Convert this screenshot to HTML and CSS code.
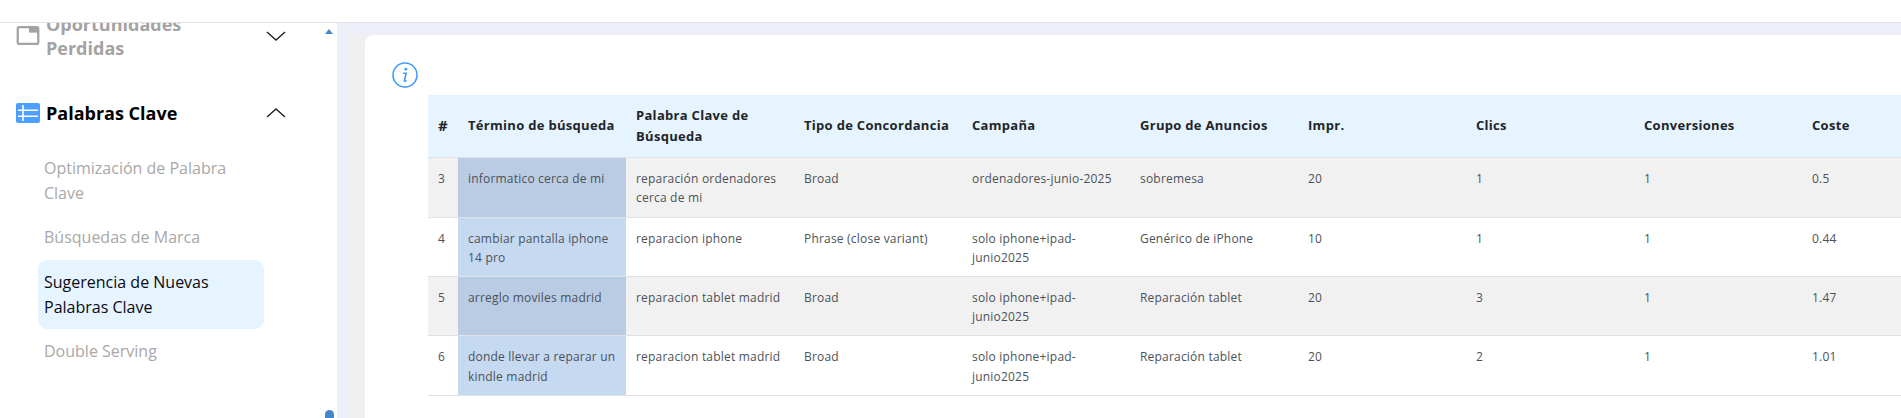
FILE: index.html
```html
<!DOCTYPE html>
<html lang="es">
<head>
<meta charset="utf-8">
<title>Palabras Clave</title>
<link rel="stylesheet" href="styles.css">
</head>
<body>
<header class="topbar"></header>
<div class="layout">
  <aside class="sidebar">
    <nav class="nav">
      <div class="group group-clipped">
        <svg class="group-icon" viewBox="0 0 24 20" aria-hidden="true"><rect x="1.2" y="1.2" width="21.6" height="17.6" rx="1.5" fill="none" stroke="#a3a3a3" stroke-width="2.4"/><rect x="13" y="1" width="10" height="6" fill="#a3a3a3"/></svg>
        <span class="group-title">Oportunidades Perdidas</span>
        <svg class="chevron" viewBox="0 0 20 10" aria-hidden="true"><path d="M1 1l9 8 9-8" fill="none" stroke="#222" stroke-width="1.4"/></svg>
      </div>
      <div class="group group-active">
        <svg class="group-icon" viewBox="0 0 24 20" aria-hidden="true"><rect width="24" height="20" rx="2" fill="#4a9fff"/><path d="M2 7.2h20M2 13.2h20M7 2v16" stroke="#fff" stroke-width="1.6"/></svg>
        <span class="group-title">Palabras Clave</span>
        <svg class="chevron" viewBox="0 0 20 10" aria-hidden="true"><path d="M1 9l9-8 9 8" fill="none" stroke="#222" stroke-width="1.4"/></svg>
      </div>
      <ul class="sub">
        <li class="sub-item">Optimización de Palabra Clave</li>
        <li class="sub-item">Búsquedas de Marca</li>
        <li class="sub-item sub-item-selected">Sugerencia de Nuevas Palabras Clave</li>
        <li class="sub-item">Double Serving</li>
      </ul>
    </nav>
    <span class="scroll-up"></span>
    <span class="scroll-thumb"></span>
  </aside>
  <main class="content">
    <div class="gutter">
      <section class="card">
        <svg class="info" viewBox="0 0 26 26" aria-hidden="true"><circle cx="13" cy="13" r="12" fill="none" stroke="#3f9bfd" stroke-width="1.6"/><circle cx="13.9" cy="7.2" r="1.4" fill="#3f9bfd"/><path d="M11.2 11.3h3l-1.8 7.4c-.1.6.6.7 2-.4" fill="none" stroke="#3f9bfd" stroke-width="1.6"/></svg>
        <table class="report">
          <thead>
            <tr><th class="col-n">#</th><th>Término de búsqueda</th><th>Palabra Clave de Búsqueda</th><th>Tipo de Concordancia</th><th>Campaña</th><th>Grupo de Anuncios</th><th>Impr.</th><th>Clics</th><th>Conversiones</th><th>Coste</th></tr>
          </thead>
          <tbody>
            <tr class="odd"><td class="col-n">3</td><td class="term">informatico cerca de mi</td><td>reparación ordenadores cerca de mi</td><td>Broad</td><td>ordenadores-junio-2025</td><td>sobremesa</td><td>20</td><td>1</td><td>1</td><td>0.5</td></tr>
            <tr><td class="col-n">4</td><td class="term">cambiar pantalla iphone 14 pro</td><td>reparacion iphone</td><td>Phrase (close variant)</td><td>solo iphone+ipad-junio2025</td><td>Genérico de iPhone</td><td>10</td><td>1</td><td>1</td><td>0.44</td></tr>
            <tr class="odd"><td class="col-n">5</td><td class="term">arreglo moviles madrid</td><td>reparacion tablet madrid</td><td>Broad</td><td>solo iphone+ipad-junio2025</td><td>Reparación tablet</td><td>20</td><td>3</td><td>1</td><td>1.47</td></tr>
            <tr><td class="col-n">6</td><td class="term">donde llevar a reparar un kindle madrid</td><td>reparacion tablet madrid</td><td>Broad</td><td>solo iphone+ipad-junio2025</td><td>Reparación tablet</td><td>20</td><td>2</td><td>1</td><td>1.01</td></tr>
          </tbody>
        </table>
      </section>
    </div>
  </main>
</div>
</body>
</html>
```

FILE: styles.css
```css
* { box-sizing: border-box; }
html, body { margin: 0; height: 100%; overflow: hidden; background: #fff; }
body { font-family: "Open Sans", "Noto Sans", sans-serif; color: #212529; }

.topbar { height: 23px; background: #fff; border-bottom: 1px solid #dee2e6; }
.layout { display: flex; height: 395px; }

.sidebar { position: relative; flex: 0 0 337px; overflow: hidden; background: #fff; }
.nav { margin-top: -12px; padding-left: 16px; }
.group { display: flex; align-items: center; width: 270px; }
.group-clipped { height: 49px; color: #a3a3a3; }
.group-active { margin-top: 40px; height: 26px; color: #000; }
.group-icon { flex: 0 0 24px; width: 24px; height: 20px; }
.group-clipped .group-icon { align-self: flex-start; margin-top: 15px; height: 19px; }
.group-title { flex: 1; padding-left: 6px; font-size: 18px; font-weight: 700; line-height: 24px; }
.group-clipped .group-title { padding-right: 60px; }
.chevron { flex: 0 0 20px; width: 20px; height: 10px; }
.group-clipped .chevron { align-self: flex-start; margin-top: 20px; }

.sub { list-style: none; display: flex; flex-direction: column; gap: 0.5px; margin: 20px 0 0 22px; padding: 0; width: 226px; }
.sub-item { padding: 9.5px 6px; font-size: 16px; line-height: 25px; color: #a8a8a8; border-radius: 9px; }
.sub-item-selected { background: #e6f4ff; color: #0a0a14; }

.scroll-up { position: absolute; left: 325px; top: 6px; width: 0; height: 0; border-left: 4.5px solid transparent; border-right: 4.5px solid transparent; border-bottom: 5px solid #4488cc; }
.scroll-thumb { position: absolute; left: 325px; bottom: 0; width: 9px; height: 8px; background: #4488cc; border-radius: 5px 5px 0 0; }

.content { flex: 1; min-width: 0; background: #eceff8; padding: 12px 0 0 13px; }
.gutter { height: 100%; background: #f0f0f0; padding-left: 15px; }
.card { height: 100%; background: #fff; border-radius: 9px 0 0 0; padding: 27px 0 0 27px; overflow: hidden; }

.info { display: block; width: 26px; height: 26px; }

.report { margin: 7px 0 0 36px; width: 1542px; table-layout: fixed; border-collapse: collapse; font-size: 12px; letter-spacing: 0.2px; }
.report th, .report td { width: 168px; padding: 11px 10px 9px; text-align: left; vertical-align: top; border-bottom: 1px solid #dee2e6; }
.report th { background: #e6f4ff; font-size: 13px; letter-spacing: 0.3px; font-weight: 700; line-height: 21.6px; padding: 9.5px 10px; vertical-align: middle; color: #212529; }
.report td { line-height: 19.2px; color: #4c5258; }
.report .col-n { width: 30px; }
.report th.col-n { font-size: 15px; }
.odd td { background: #f1f1f1; }
.report .term { background: #c5d9f1; }
.report .odd .term { background: #b9cce4; }
```
